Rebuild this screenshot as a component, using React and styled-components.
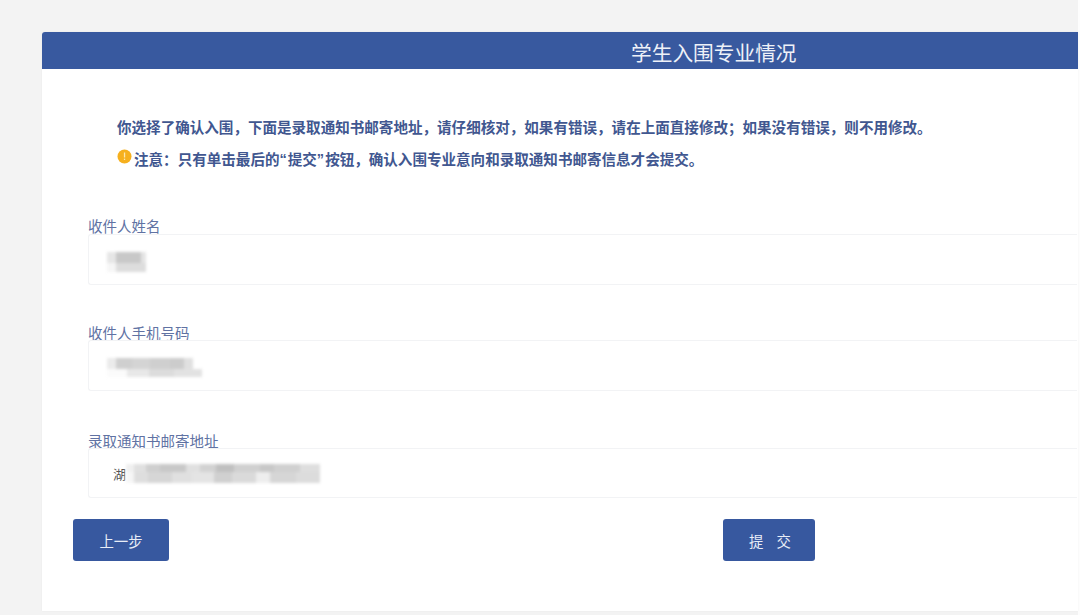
import React from "react";
import styled, { createGlobalStyle } from "styled-components";

const Global = createGlobalStyle`
  html, body { margin: 0; padding: 0; height: 100%; background: #f3f3f3; overflow: hidden; }
  body { font-family: "Noto Sans CJK SC", "Liberation Sans", sans-serif; }
`;
const Page = styled.div`
  box-sizing: border-box;
  width: 1080px;
  height: 615px;
  padding: 32px 2px 4px 42px;
  background: linear-gradient(to right, #f3f3f3 1078px, #fdfdfd 1078px);
  display: flex;
`;
const Card = styled.main`
  flex: 1;
  display: flex;
  flex-direction: column;
  background: #fff;
  border-radius: 3px 0 0 0;
  box-shadow: 0 0 2px rgba(0, 0, 0, 0.05);
`;
const Header = styled.h1`
  margin: 0;
  height: 37px;
  flex: none;
  box-sizing: border-box;
  padding-left: 589px;
  background: #38599f;
  border-radius: 3px 0 0 0;
  color: #eef1f8;
  font-size: 20.7px;
  line-height: 40px;
  font-weight: 400;
  white-space: nowrap;
  overflow: hidden;
`;
const Notice = styled.section`
  padding: 47px 0 0 75px;
  display: flex;
  flex-direction: column;
  gap: 11px;
`;
const NoticeLine = styled.p`
  margin: 0;
  display: flex;
  align-items: center;
  height: 21px;
  font-size: 14.55px;
  font-weight: 700;
  color: #415790;
  white-space: nowrap;
`;
const Quote = styled.span`
  font-family: "Liberation Sans", sans-serif;
  letter-spacing: 1px;
`;
const WarnDot = styled.svg`
  width: 15px;
  height: 15px;
  flex: none;
  margin: -5px 2px 0 0;
`;
const Form = styled.form`
  padding: 48px 1px 0 46px;
  display: flex;
  flex-direction: column;
`;
const Field = styled.div`
  display: flex;
  flex-direction: column;
  margin-top: ${(p) => p.$top || 0}px;
`;
const Label = styled.label`
  font-size: 14.5px;
  line-height: 17px;
  height: 17px;
  margin-bottom: ${(p) => (p.$tight ? -1 : 0)}px;
  color: #6072a3;
  white-space: nowrap;
`;
const InputBox = styled.div`
  height: ${(p) => p.$h}px;
  box-sizing: border-box;
  border: 1px solid #f2f3f5;
  border-right: 0;
  border-radius: 3px 0 0 3px;
  padding-left: ${(p) => p.$pad}px;
  display: flex;
  align-items: center;
  font-size: 13px;
  color: #555;
`;
const Blur = styled.div`
  display: flex;
  flex-direction: column;
  filter: blur(${(p) => p.$r}px);
  transform: translateY(${(p) => p.$y}px);
`;
const PatchRow = styled.div`
  display: flex;
`;
const Patch = styled.span`
  display: block;
  flex: none;
  height: ${(p) => p.$h}px;
  background: ${(p) => p.$c};
`;
const Actions = styled.div`
  display: flex;
  padding: 21px 0 0 31px;
`;
const Button = styled.button`
  height: 42px;
  width: ${(p) => p.$w}px;
  margin-left: ${(p) => p.$ml || 0}px;
  border: 0;
  border-radius: 3px;
  background: #37589f;
  color: #e8edf7;
  font-family: inherit;
  font-size: 14.4px;
  letter-spacing: ${(p) => p.$ls || 0}px;
  padding: 0 0 0 ${(p) => p.$pl || 0}px;
`;

/* each row is a list of [width, colour]; rows stack to form the blurred redaction */
const patches = {
  name: [
    { h: 11, cells: [[9, "#e6e6e6"], [25, "#c8c8c8"], [5, "#e4e4e4"]] },
    { h: 9, cells: [[9, "#f6f6f6"], [30, "#dddddd"]] },
  ],
  phone: [
    { h: 11, cells: [[9, "#ebebeb"], [16, "#cfcfcf"], [18, "#d4d4d4"], [20, "#cfcfcf"], [14, "#cccccc"], [9, "#e0e0e0"]] },
    { h: 8, cells: [[20, "#fbfbfb"], [22, "#e8e8e8"], [25, "#dcdcdc"], [28, "#e2e2e2"]] },
  ],
  addr: [
    { h: 8, cells: [[8, "#f0f0f0"], [12, "#e0e0e0"], [14, "#cfcfcf"], [26, "#c8c8c8"], [14, "#e0e0e0"], [16, "#d2d2d2"], [18, "#c0c0c0"], [26, "#d0d0d0"], [14, "#c8c8c8"], [26, "#d0d0d0"], [20, "#dedede"]] },
    { h: 11, cells: [[8, "#f6f6f6"], [14, "#dedede"], [24, "#d6d6d6"], [20, "#e0e0e0"], [22, "#e4e4e4"], [18, "#d0d0d0"], [24, "#dadada"], [14, "#eeeeee"], [26, "#d6d6d6"], [24, "#dcdcdc"]] },
  ],
};

const Redaction = ({ rows, r, y }) => (
  <Blur $r={r} $y={y} aria-hidden="true">
    {rows.map((row, i) => (
      <PatchRow key={i}>
        {row.cells.map(([w, c], j) => (
          <Patch key={j} $h={row.h} $c={c} style={{ width: w }} />
        ))}
      </PatchRow>
    ))}
  </Blur>
);

export default function App() {
  return (
    <Page>
      <Global />
      <Card>
        <Header>学生入围专业情况</Header>
        <Notice>
          <NoticeLine>你选择了确认入围，下面是录取通知书邮寄地址，请仔细核对，如果有错误，请在上面直接修改；如果没有错误，则不用修改。</NoticeLine>
          <NoticeLine>
            <WarnDot viewBox="0 0 15 15">
              <circle cx="7.5" cy="7.5" r="7" fill="#f6b01e" />
              <rect x="6.9" y="3.5" width="1.3" height="5" fill="#fde7b0" />
              <rect x="6.9" y="9.6" width="1.3" height="1.4" fill="#fde7b0" />
            </WarnDot>
            注意：只有单击最后的<Quote>“</Quote>提交<Quote>”</Quote>按钮，确认入围专业意向和录取通知书邮寄信息才会提交。
          </NoticeLine>
        </Notice>
        <Form>
          <Field>
            <Label>收件人姓名</Label>
            <InputBox $h={51} $pad={18}>
              <Redaction rows={patches.name} r={1.5} y={2} />
            </InputBox>
          </Field>
          <Field $top={39}>
            <Label $tight>收件人手机号码</Label>
            <InputBox $h={51} $pad={18}>
              <Redaction rows={patches.phone} r={1.5} y={2} />
            </InputBox>
          </Field>
          <Field $top={41}>
            <Label $tight>录取通知书邮寄地址</Label>
            <InputBox $h={50} $pad={24}>
              <span>湖</span>
              <Redaction rows={patches.addr} r={1.4} y={0} />
            </InputBox>
          </Field>
        </Form>
        <Actions>
          <Button type="button" $w={96}>上一步</Button>
          <Button type="button" $w={92} $ml={554} $ls={5} $pl={7}>提 交</Button>
        </Actions>
      </Card>
    </Page>
  );
}
